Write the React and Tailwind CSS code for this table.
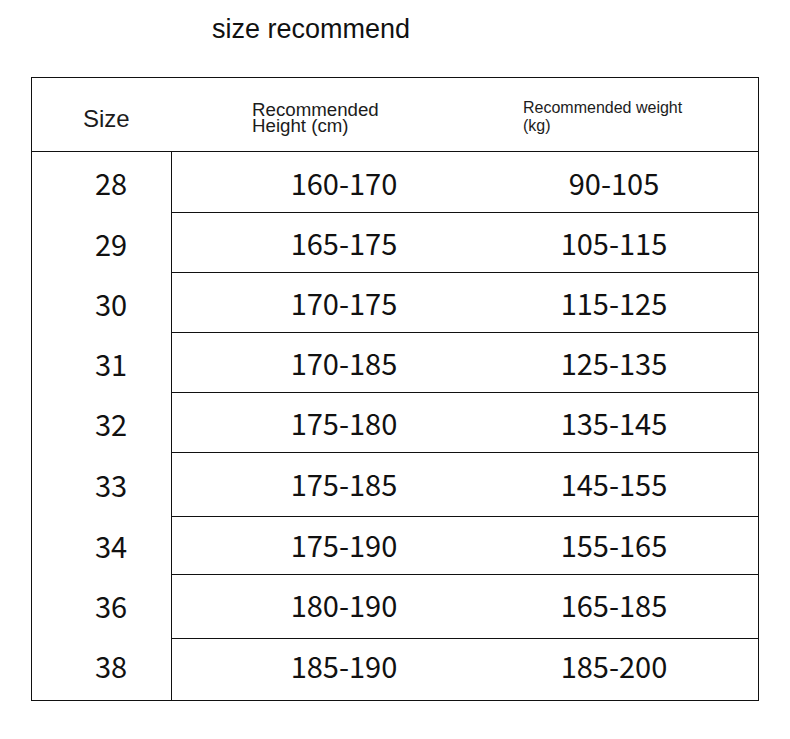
import React from "react";

const rows = [
  { size: "28", height: "160-170", weight: "90-105", h: "h-[61px]" },
  { size: "29", height: "165-175", weight: "105-115", h: "h-[60px]" },
  { size: "30", height: "170-175", weight: "115-125", h: "h-[60px]" },
  { size: "31", height: "170-185", weight: "125-135", h: "h-[60px]" },
  { size: "32", height: "175-180", weight: "135-145", h: "h-[60px]" },
  { size: "33", height: "175-185", weight: "145-155", h: "h-[64px] pb-[2px]" },
  { size: "34", height: "175-190", weight: "155-165", h: "h-[58px] pb-[2px]" },
  { size: "36", height: "180-190", weight: "165-185", h: "h-[64px] pb-[4px]" },
  { size: "38", height: "185-190", weight: "185-200", h: "h-[61px] pb-[9px]" },
];

const numFont =
  "font-['Noto_Sans_CJK_SC','Noto_Sans',sans-serif] text-[29px] leading-[29px] text-[#111]";

export default function App() {
  return (
    <div className="w-[790px] h-[739px] bg-white font-['Liberation_Sans',Arial,sans-serif]">
      {/* title */}
      <div className="pt-[14px] pl-[212px] text-[27px] leading-[30px] text-[#111]">
        size recommend
      </div>

      <div className="ml-[31px] mt-[33px] w-[728px] border border-[#111]">
        {/* header */}
        <div className="flex h-[74px] border-b border-[#111] text-[#1c1c1c]">
          <div className="w-[140px] pl-[51px] pt-[29px] text-[24px] leading-[24px]">
            Size
          </div>
          <div className="w-[346px] pl-[80px] pt-[24px] text-[18.7px] leading-[16px]">
            Recommended
            <br />
            Height (cm)
          </div>
          <div className="pl-[5px] pt-[21px] text-[16px] leading-[18px]">
            Recommended weight
            <br />
            (kg)
          </div>
        </div>

        {/* body */}
        <div className="flex">
          <div className="w-[140px] border-r border-[#111]">
            {rows.map((r) => (
              <div
                key={r.size}
                className={`${r.h} flex items-center justify-center pl-[19px] ${numFont}`}
              >
                {r.size}
              </div>
            ))}
          </div>
          <div className="flex-1">
            {rows.map((r, i) => (
              <div
                key={r.size}
                className={`${r.h} flex items-center ${numFont} ${
                  i < rows.length - 1 ? "border-b border-[#111]" : ""
                }`}
              >
                <div className="w-[344px] text-center">{r.height}</div>
                <div className="w-[196px] text-center">{r.weight}</div>
              </div>
            ))}
          </div>
        </div>
      </div>
    </div>
  );
}
